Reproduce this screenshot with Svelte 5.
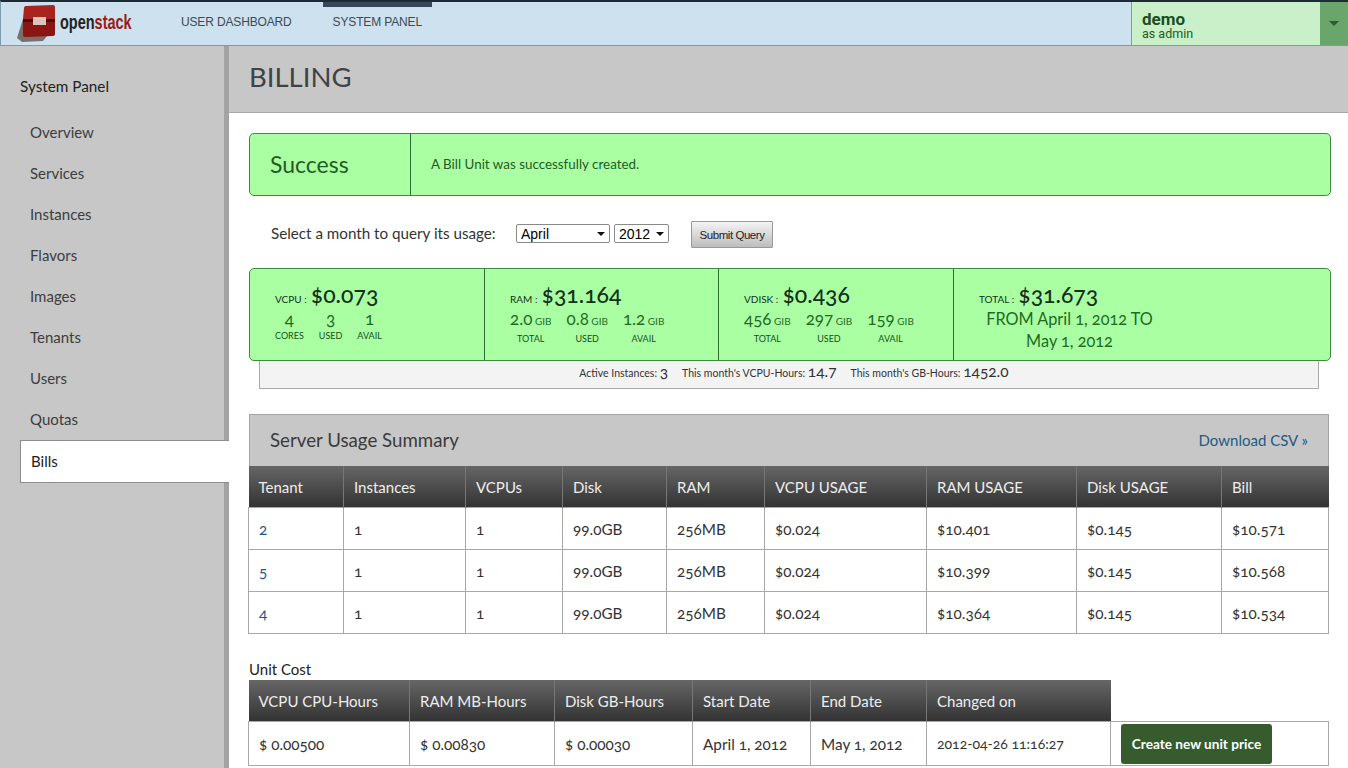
<script>
	const navItems = ['Overview', 'Services', 'Instances', 'Flavors', 'Images', 'Tenants', 'Users', 'Quotas'];

	const months = ['January', 'February', 'March', 'April', 'May', 'June', 'July', 'August', 'September', 'October', 'November', 'December'];

	const stats = [
		{
			label: 'VCPU',
			price: '$0.073',
			parts: [
				{ value: '4', name: 'CORES' },
				{ value: '3', name: 'USED' },
				{ value: '1', name: 'AVAIL' }
			]
		},
		{
			label: 'RAM',
			price: '$31.164',
			parts: [
				{ value: '2.0', unit: 'GIB', name: 'TOTAL' },
				{ value: '0.8', unit: 'GIB', name: 'USED' },
				{ value: '1.2', unit: 'GIB', name: 'AVAIL' }
			]
		},
		{
			label: 'VDISK',
			price: '$0.436',
			parts: [
				{ value: '456', unit: 'GIB', name: 'TOTAL' },
				{ value: '297', unit: 'GIB', name: 'USED' },
				{ value: '159', unit: 'GIB', name: 'AVAIL' }
			]
		}
	];

	const usageCols = [95, 122, 97, 104, 98, 162, 150, 145, 107];
	const usageHead = ['Tenant', 'Instances', 'VCPUs', 'Disk', 'RAM', 'VCPU USAGE', 'RAM USAGE', 'Disk USAGE', 'Bill'];
	const usageRows = [
		['2', '1', '1', '99.0GB', '256MB', '$0.024', '$10.401', '$0.145', '$10.571'],
		['5', '1', '1', '99.0GB', '256MB', '$0.024', '$10.399', '$0.145', '$10.568'],
		['4', '1', '1', '99.0GB', '256MB', '$0.024', '$10.364', '$0.145', '$10.534']
	];

	const costCols = [161, 145, 138, 118, 116, 184, 218];
	const costHead = ['VCPU CPU-Hours', 'RAM MB-Hours', 'Disk GB-Hours', 'Start Date', 'End Date', 'Changed on'];
	const costRow = ['$ 0.00500', '$ 0.00830', '$ 0.00030', 'April 1, 2012', 'May 1, 2012', '2012-04-26 11:16:27'];
</script>

<div class="page">
	<header class="topbar">
		<div class="logo">
			<svg width="39" height="37" viewBox="0 0 39 37">
				<path d="M0 33 L6 14 L8 14 L8 30 L30 31 L26 36 L5 37 Z" fill="#77706c" />
				<path d="M7 3 Q7 1 9 1 L36 0 Q38 0 38 2 L38 14 L29 14 L28 12 L17 12 L16 14 L6 14 Z" fill="#a8241f" />
				<path d="M6 17 L16 17 L17 20 L28 20 L29 17 L38 17 L38 29 Q38 31 36 31 L9 32 Q6 32 6 30 Z" fill="#8a1512" />
				<path d="M6 14 H16 L16 17 H6 Z M29 14 H38 V17 H29 Z" fill="#4a0b09" />
				<path d="M16 12 H29 V20 H16 Z" fill="#d9c4c0" />
			</svg>
			<span class="wordmark"><span class="open">open</span><span class="stack">stack</span></span>
		</div>
		<nav class="tabs">
			<a class="tab" href="#user">USER DASHBOARD</a>
			<a class="tab active" href="#system">SYSTEM PANEL</a>
		</nav>
		<div class="user">
			<div class="user-name">
				<strong>demo</strong>
				<span>as admin</span>
			</div>
			<div class="user-toggle"><i></i></div>
		</div>
	</header>

	<div class="layout">
		<aside class="sidebar">
			<h4>System Panel</h4>
			<ul>
				{#each navItems as item (item)}
					<li>{item}</li>
				{/each}
				<li class="current">Bills</li>
			</ul>
		</aside>

		<main class="main">
			<div class="page-title"><h1>BILLING</h1></div>

			<div class="content">
				<div class="alert">
					<div class="alert-title">Success</div>
					<div class="alert-text">A Bill Unit was successfully created.</div>
				</div>

				<form class="query" on:submit|preventDefault>
					<label for="month">Select a month to query its usage:</label>
					<span class="sel month">
						<select id="month">
							{#each months as m (m)}
								<option selected={m === 'April'}>{m}</option>
							{/each}
						</select>
					</span>
					<span class="sel year">
						<select>
							<option>2011</option>
							<option selected>2012</option>
						</select>
					</span>
					<button type="submit">Submit Query</button>
				</form>

				<div class="stats">
					{#each stats as s (s.label)}
						<div class="stat">
							<div class="stat-head"><small>{s.label} :</small> <b>{s.price}</b></div>
							<div class="stat-parts">
								{#each s.parts as p (p.name)}
									<div class="part">
										<div class="part-value">{p.value}{#if p.unit}<small>{p.unit}</small>{/if}</div>
										<div class="part-name">{p.name}</div>
									</div>
								{/each}
							</div>
						</div>
					{/each}
					<div class="stat total">
						<div class="stat-head"><small>TOTAL :</small> <b>$31.673</b></div>
						<div class="range">FROM April 1, 2012 TO<br />May 1, 2012</div>
					</div>
				</div>

				<div class="strip">
					<span>Active Instances: <b>3</b></span>
					<span>This month's VCPU-Hours: <b>14.7</b></span>
					<span>This month's GB-Hours: <b>1452.0</b></span>
				</div>

				<div class="summary-head">
					<h3>Server Usage Summary</h3>
					<a href="#csv">Download CSV »</a>
				</div>
				<table class="usage">
					<colgroup>
						{#each usageCols as w, i (i)}
							<col width={w} />
						{/each}
					</colgroup>
					<thead>
						<tr>
							{#each usageHead as h (h)}
								<th>{h}</th>
							{/each}
						</tr>
					</thead>
					<tbody>
						{#each usageRows as row, r (r)}
							<tr>
								{#each row as cell, c (c)}
									<td>
										{#if c === 0}<a class="tenant" href="#tenant">{cell}</a>{:else}{cell}{/if}
									</td>
								{/each}
							</tr>
						{/each}
					</tbody>
				</table>

				<div class="unit-label">Unit Cost</div>
				<table class="usage cost">
					<colgroup>
						{#each costCols as w, i (i)}
							<col width={w} />
						{/each}
					</colgroup>
					<thead>
						<tr>
							{#each costHead as h (h)}
								<th>{h}</th>
							{/each}
							<th class="blank"></th>
						</tr>
					</thead>
					<tbody>
						<tr>
							{#each costRow as cell, c (c)}
								<td class:stamp={c === 5}>{cell}</td>
							{/each}
							<td><a class="create" href="#create">Create new unit price</a></td>
						</tr>
					</tbody>
				</table>
			</div>
		</main>
	</div>
</div>

<style>
	:global(body) {
		margin: 0;
		background: #fff;
	}

	.page {
		height: 768px;
		overflow: hidden;
		display: flex;
		flex-direction: column;
		font-family: 'Lato', 'Open Sans', sans-serif;
		font-variant-numeric: oldstyle-nums;
		color: #333;
	}

	/* top bar */
	.topbar {
		height: 46px;
		box-sizing: border-box;
		display: flex;
		background: #cde1ee;
		border-top: 2px solid #1c2b36;
		border-bottom: 1px solid #7f9aaa;
		border-left: 1px solid #7f9aaa;
		flex: none;
	}

	.logo {
		width: 170px;
		flex: none;
		display: flex;
		align-items: center;
		padding-left: 16px;
		box-sizing: border-box;
		height: 43px;
	}

	.logo svg {
		flex: none;
	}

	.wordmark {
		font-family: 'Liberation Sans', sans-serif;
		font-weight: 700;
		font-size: 21px;
		margin-left: 4px;
		margin-top: -3px;
		transform: scaleX(0.69);
		transform-origin: left center;
		white-space: nowrap;
	}

	.open {
		color: #222;
	}

	.stack {
		color: #9a1c18;
	}

	.tabs {
		display: flex;
		flex: 1;
	}

	.tab {
		font-family: 'Liberation Sans', sans-serif;
		font-size: 12px;
		letter-spacing: -0.15px;
		color: #3c4a55;
		text-decoration: none;
		padding: 13px 10px 0;
		margin-right: 21px;
	}

	.tab.active {
		border-top: 5px solid #35495a;
		padding-top: 8px;
		height: 22px;
	}

	.user {
		width: 217px;
		flex: none;
		display: flex;
		border-left: 1px solid #7f9aaa;
		background: #c9f0c8;
		box-sizing: border-box;
	}

	.user-name {
		flex: 1;
		padding: 10px 0 0 10px;
		color: #1d5a22;
		font-family: 'Roboto', 'Liberation Sans', sans-serif;
	}

	.user-name strong {
		display: block;
		font-size: 17px;
		line-height: 15px;
		color: #1b4f1f;
	}

	.user-name span {
		display: block;
		font-size: 12.5px;
		line-height: 13px;
	}

	.user-toggle {
		width: 28px;
		background: #6aa56c;
		display: flex;
		align-items: center;
		justify-content: center;
	}

	.user-toggle i {
		width: 0;
		height: 0;
		border-left: 5px solid transparent;
		border-right: 5px solid transparent;
		border-top: 5px solid #2e5a30;
	}

	/* body */
	.layout {
		flex: 1;
		display: flex;
		min-height: 0;
	}

	.sidebar {
		width: 229px;
		flex: none;
		box-sizing: border-box;
		background: #c7c7c7;
		border-right: 5px solid #a3a3a3;
		padding: 30px 0 0 20px;
	}

	.sidebar h4 {
		margin: 0 0 16px;
		font-size: 15.3px;
		font-weight: 400;
		line-height: 20px;
		color: #222;
	}

	.sidebar ul {
		list-style: none;
		margin: 0;
		padding: 0;
	}

	.sidebar li {
		height: 41px;
		line-height: 41px;
		padding-left: 10px;
		font-size: 15px;
		color: #3d3d3d;
		box-sizing: border-box;
	}

	.sidebar li.current {
		background: #fff;
		border: 1px solid #8c8c8c;
		border-right: none;
		height: 43px;
		margin-right: -5px;
		position: relative;
		color: #222;
	}

	.main {
		flex: 1;
		min-width: 0;
	}

	.page-title {
		height: 67px;
		box-sizing: border-box;
		background: #c7c7c7;
		border-bottom: 1px solid #a8a8a8;
		padding: 13px 0 0 20px;
	}

	h1 {
		margin: 0;
		font-size: 27.5px;
		line-height: 36px;
		font-weight: 400;
		color: #3f4246;
	}

	.content {
		padding: 20px 18px 0 20px;
	}

	.alert {
		width: 1082px;
		height: 63px;
		box-sizing: border-box;
		display: flex;
		background: #aaffa3;
		border: 1px solid #3c8c3c;
		border-radius: 5px;
		color: #1f5c22;
	}

	.alert-title {
		width: 161px;
		box-sizing: border-box;
		border-right: 1px solid #2c6e2f;
		padding-left: 20px;
		font-size: 23px;
		line-height: 60px;
	}

	.alert-text {
		padding-left: 20px;
		font-size: 13.4px;
		line-height: 60px;
	}

	.query {
		display: flex;
		align-items: center;
		height: 27px;
		margin-top: 25px;
		padding-left: 22px;
		font-size: 15.2px;
	}

	.query label {
		width: 245px;
		margin-top: -4px;
	}

	.sel {
		position: relative;
		display: block;
		height: 19px;
		margin-top: -2px;
	}

	.sel::after {
		content: '';
		position: absolute;
		right: 5px;
		top: 8px;
		border-left: 4px solid transparent;
		border-right: 4px solid transparent;
		border-top: 4px solid #111;
		pointer-events: none;
	}

	.sel select {
		appearance: none;
		display: block;
		width: 100%;
		height: 19px;
		padding: 0 0 0 4px;
		font-family: 'Liberation Sans', sans-serif;
		font-size: 14px;
		background: #fff;
		border: 1px solid #8a8a8a;
		border-radius: 2px;
		color: #000;
	}

	.month {
		width: 94px;
		margin-right: 4px;
	}

	.year {
		width: 55px;
		margin-right: 22px;
	}

	.query button {
		width: 82px;
		height: 27px;
		padding: 0;
		font-family: 'Liberation Sans', sans-serif;
		font-size: 11.5px;
		letter-spacing: -0.45px;
		color: #222;
		background: linear-gradient(#f4f4f4, #bdbdbd);
		border: 1px solid #999;
		border-radius: 1px;
	}

	.stats {
		width: 1082px;
		height: 93px;
		box-sizing: border-box;
		margin-top: 20px;
		display: flex;
		background: #aaffa3;
		border: 1px solid #3c8c3c;
		border-radius: 5px;
		color: #1f6b25;
	}

	.stat {
		width: 235px;
		box-sizing: border-box;
		border-right: 1px solid #2c6e2f;
		padding: 11px 0 0 25px;
		white-space: nowrap;
	}

	.stat:nth-child(2) {
		width: 234px;
	}

	.stat.total {
		flex: 1;
		border-right: none;
	}

	.stat-head {
		color: #14301a;
		line-height: 28px;
		height: 28px;
	}

	.stat-head small {
		font-size: 10px;
	}

	.stat-head b {
		font-size: 23px;
		font-weight: 500;
	}

	.stat-parts {
		display: flex;
		gap: 15px;
		margin-top: 2px;
	}

	.part {
		text-align: center;
	}

	.part-value {
		font-size: 17px;
		line-height: 18px;
	}

	.part-value small {
		font-size: 10px;
		margin-left: 2.5px;
	}

	.part-name {
		font-size: 9px;
		line-height: 14px;
		margin-top: 2px;
		color: #14501c;
	}

	.stat:first-child .part-name {
		margin-top: 1px;
	}

	.range {
		font-size: 16.3px;
		line-height: 22px;
		width: 181px;
		text-align: center;
	}

	.strip {
		width: 1060px;
		height: 28px;
		box-sizing: border-box;
		margin-left: 10px;
		padding-left: 10px;
		display: flex;
		justify-content: center;
		gap: 14px;
		background: #f3f3f3;
		border: 1px solid #aaa;
		border-top: none;
		font-size: 10.5px;
		line-height: 20px;
		color: #333;
	}

	.strip b {
		font-size: 15.5px;
		font-weight: 400;
	}

	.summary-head {
		width: 1080px;
		height: 52px;
		box-sizing: border-box;
		margin-top: 25px;
		padding: 0 20px 2px;
		display: flex;
		justify-content: space-between;
		align-items: center;
		background: #c7c7c7;
		border: 1px solid #a3a3a3;
		border-bottom: none;
	}

	.summary-head h3 {
		margin: 0;
		font-size: 18.7px;
		font-weight: 400;
		color: #3b3b3b;
	}

	.summary-head a {
		font-size: 15px;
		color: #1e5a82;
		text-decoration: none;
	}

	.usage {
		width: 1080px;
		margin-left: -1px;
		border-collapse: collapse;
		table-layout: fixed;
	}

	.usage th {
		height: 41px;
		padding: 0 10px;
		text-align: left;
		font-size: 15px;
		font-weight: 400;
		color: #eee;
		background: linear-gradient(#666, #333);
		border-left: 1px solid #777;
	}

	.usage th:first-child {
		border-left: none;
	}

	.usage td {
		height: 42px;
		box-sizing: border-box;
		padding: 0 10px;
		font-size: 15.3px;
		color: #333;
		border: 1px solid #a8a8a8;
	}

	.tenant {
		color: #1e5a82;
		text-decoration: none;
	}

	.unit-label {
		margin-top: 25px;
		font-size: 15px;
		line-height: 20px;
		height: 20px;
		margin-bottom: 1px;
		color: #222;
	}

	.usage th.blank {
		background: #fff;
		border: none;
	}

	.cost td {
		height: 44px;
	}

	.usage td.stamp {
		font-size: 14px;
	}

	.create {
		display: inline-block;
		width: 151px;
		height: 40px;
		line-height: 40px;
		text-align: center;
		background: #365c2e;
		color: #fff;
		font-size: 13.6px;
		border-radius: 3px;
		font-weight: 700;
		text-decoration: none;
		vertical-align: middle;
	}
</style>
